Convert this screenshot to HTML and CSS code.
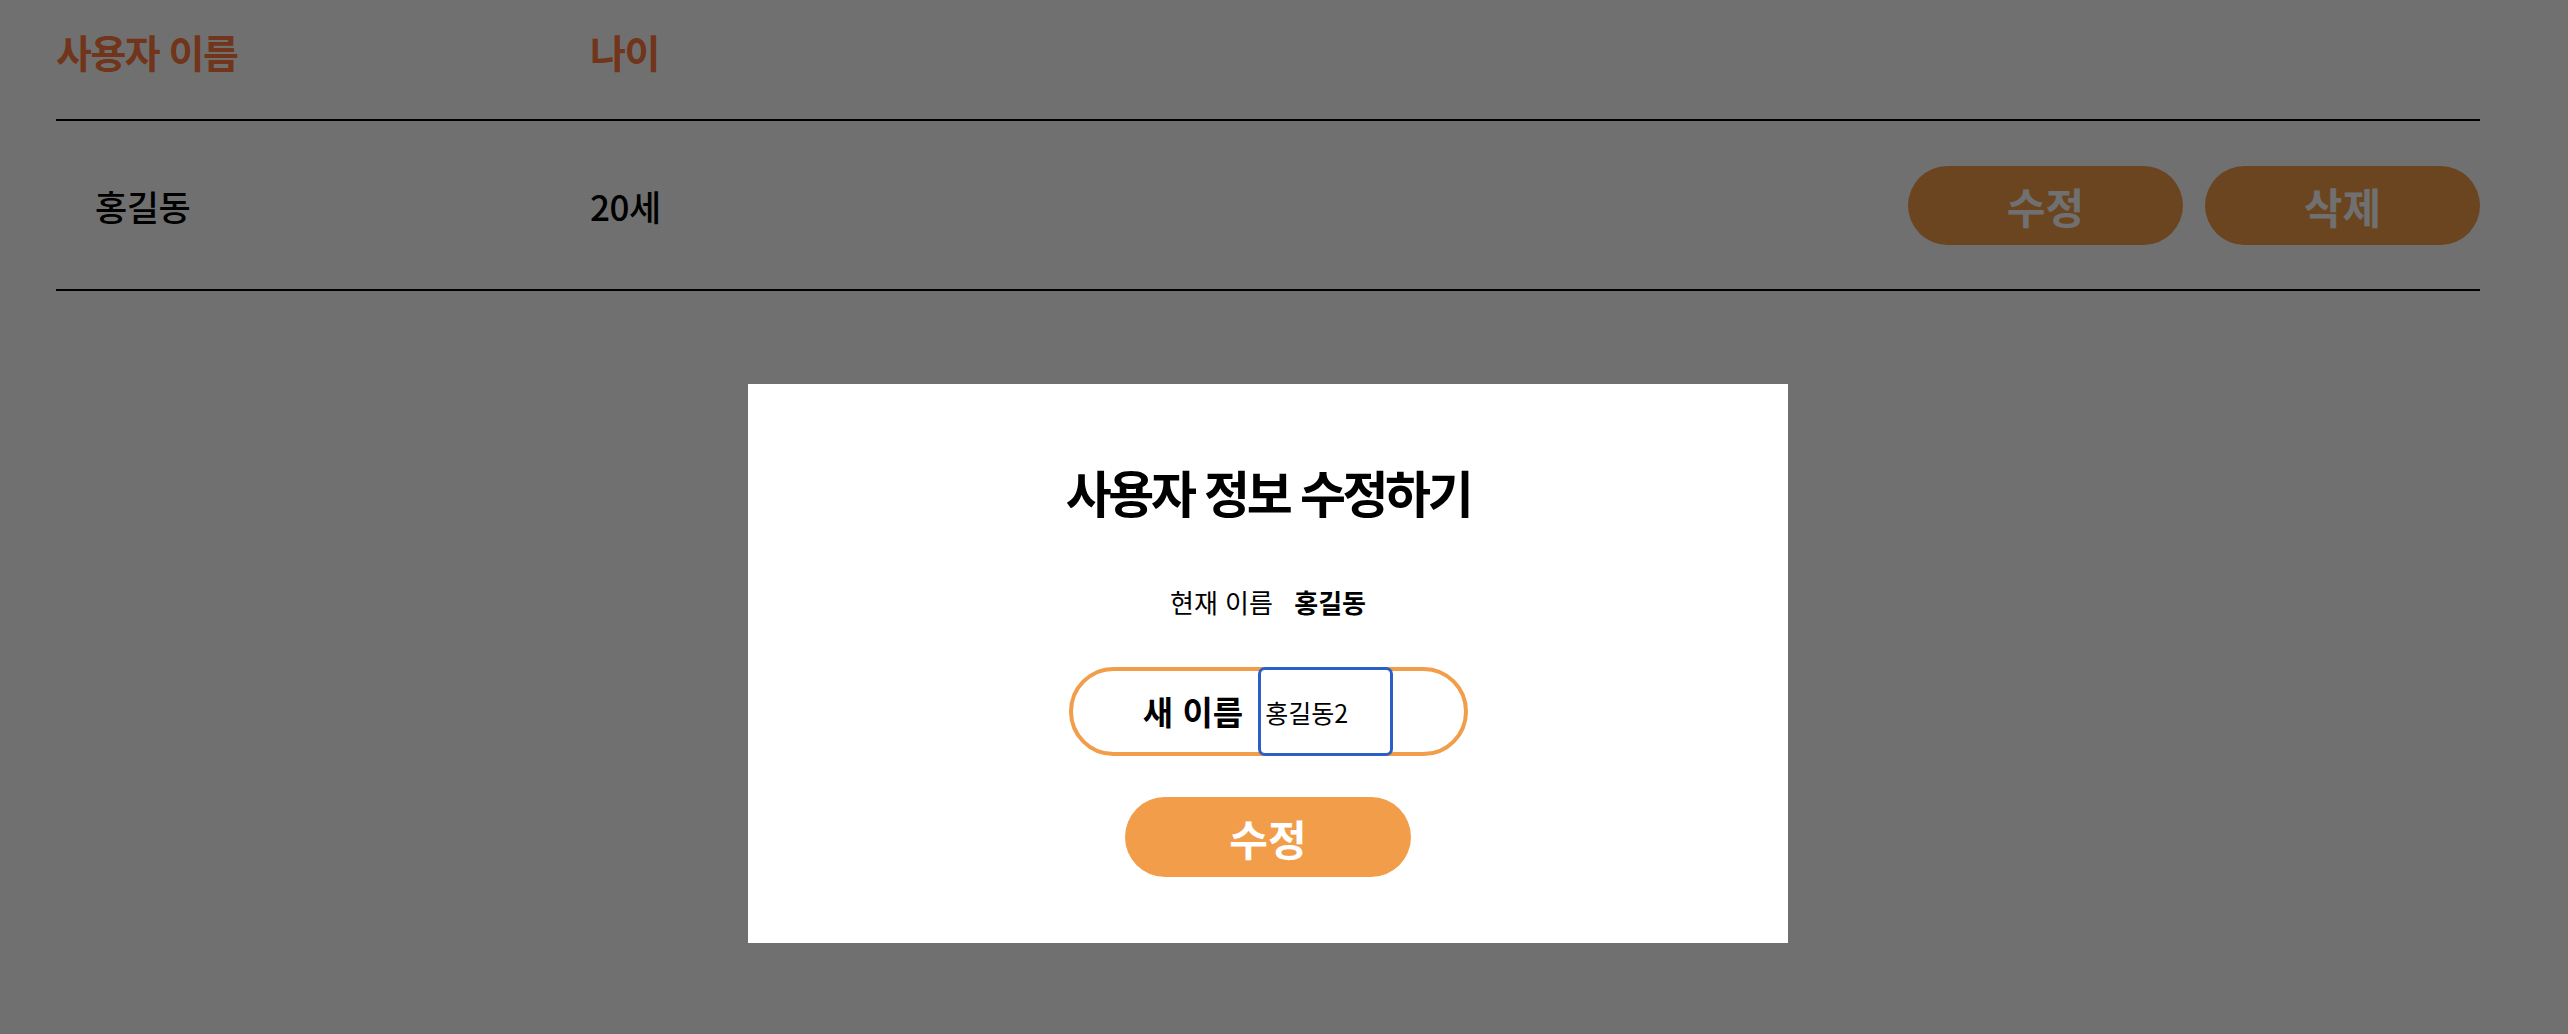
FILE: index.html
```html
<!DOCTYPE html>
<html lang="ko">
<head>
    <meta charset="UTF-8">
    <meta name="viewport" content="width=device-width, initial-scale=1.0">
    <title>사용자 목록</title>
    <link rel="stylesheet" href="styles.css">
</head>
<body>

<div class="user-list">
    <div class="list-head">
        <span>사용자 이름</span>
        <span>나이</span>
        <span></span>
    </div>

    <div class="list-row">
        <div class="user-name">홍길동</div>
        <div class="user-age">20세</div>
        <div class="row-actions">
            <button class="action-button">수정</button>
            <button class="action-button">삭제</button>
        </div>
    </div>
</div>

<!-- 수정 모달 -->
<div class="modal-backdrop">
    <div class="modal">
        <h2 class="modal-title">사용자 정보 수정하기</h2>
        <p class="current-name">현재 이름 <strong>홍길동</strong></p>
        <div class="name-field">
            <label for="newName">새 이름</label>
            <input type="text" id="newName" value="홍길동2">
        </div>
        <button class="submit-button">수정</button>
    </div>
</div>

</body>
</html>
```

FILE: styles.css
```css
body {
    margin: 0;
    background-color: #ffffff;
    font-family: "Noto Sans CJK KR", "Noto Sans", sans-serif;
    color: #000;
}

.user-list {
    margin-left: 56px;
    width: 2424px;
}

.list-head,
.list-row {
    display: grid;
    grid-template-columns: 534px 1fr auto;
    border-bottom: 2px solid #000;
}

.list-head {
    padding: 32px 0 48px;
}

.list-head span {
    font-size: 39px;
    font-weight: 700;
    line-height: 1;
    letter-spacing: -1.5px;
    color: #ff7a3c;
}

.list-row {
    height: 168px;
    align-items: center;
}

.user-name,
.user-age {
    font-size: 35px;
    font-weight: 500;
    line-height: 1;
    letter-spacing: -0.5px;
}

.user-name {
    padding-left: 39px;
}

.row-actions {
    display: flex;
    gap: 22px;
}

.action-button,
.submit-button {
    height: 79px;
    border: none;
    border-radius: 40px;
    background-color: #f29d49;
    color: #ffffff;
    font-family: inherit;
    font-size: 42px;
    font-weight: 700;
    letter-spacing: 0;
    cursor: pointer;
}

.action-button {
    width: 275px;
}

.modal-backdrop {
    position: fixed;
    inset: 0;
    background-color: rgba(0, 0, 0, 0.56);
    display: flex;
    justify-content: center;
    align-items: flex-start;
    padding: 384px 32px 0 0;
}

.modal {
    width: 1040px;
    height: 559px;
    box-sizing: border-box;
    padding-top: 82px;
    background-color: #ffffff;
    display: flex;
    flex-direction: column;
    align-items: center;
}

.modal-title {
    margin: 0;
    font-size: 50px;
    font-weight: 700;
    line-height: 1;
    letter-spacing: -3.4px;
}

.current-name {
    margin: 73px 0 0;
    font-size: 26px;
    line-height: 1;
}

.current-name strong {
    margin-left: 14px;
}

.name-field {
    margin-top: 52px;
    width: 399px;
    height: 89px;
    box-sizing: border-box;
    border: 4px solid #f29d49;
    border-radius: 45px;
    display: flex;
    justify-content: center;
    gap: 15px;
}

.name-field label {
    align-self: center;
    font-size: 33px;
    font-weight: 700;
    line-height: 1;
}

.name-field input {
    width: 135px;
    margin: -4px 0;
    box-sizing: border-box;
    padding: 0 4px;
    border: 3px solid #2b5fc6;
    border-radius: 7px;
    outline: none;
    background: #ffffff;
    font-family: inherit;
    font-size: 25px;
    color: #000;
}

.submit-button {
    margin-top: 41px;
    width: 286px;
    height: 80px;
}
```
